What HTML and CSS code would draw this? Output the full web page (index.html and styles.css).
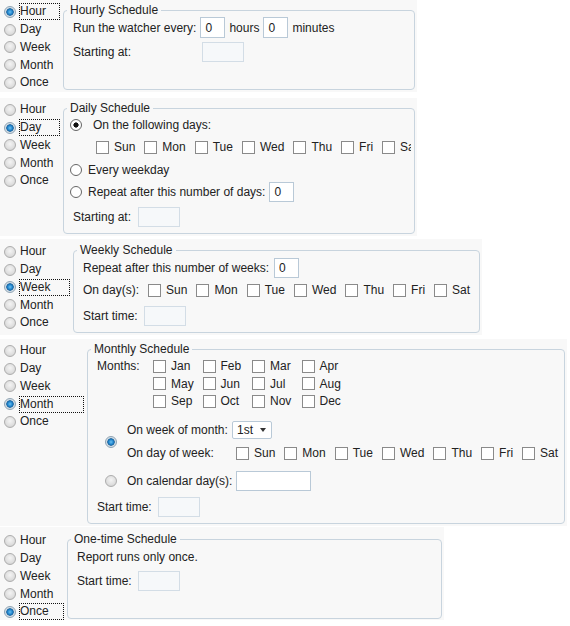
FILE: index.html
```html
<!DOCTYPE html>
<html>
<head>
<meta charset="utf-8">
<link rel="stylesheet" href="styles.css">
</head>
<body>

<div class="panel p1">
  <div class="choices">
    <div class="opt"><span class="rb on"></span><span class="lbl focus fw-hour">Hour</span></div>
    <div class="opt"><span class="rb"></span><span class="lbl">Day</span></div>
    <div class="opt"><span class="rb"></span><span class="lbl">Week</span></div>
    <div class="opt"><span class="rb"></span><span class="lbl">Month</span></div>
    <div class="opt"><span class="rb"></span><span class="lbl">Once</span></div>
  </div>
  <fieldset class="fs fs-hourly">
    <legend>Hourly Schedule</legend>
    <div class="hourly">
      <span class="t">Run the watcher every:</span>
      <div class="ctl"><input class="inp num" value="0"><span class="t">hours</span><input class="inp num" value="0"><span class="t">minutes</span></div>
      <span class="t">Starting at:</span>
      <div class="ctl"><input class="inp dis dis-first" disabled></div>
    </div>
  </fieldset>
</div>

<div class="panel p2">
  <div class="choices">
    <div class="opt"><span class="rb"></span><span class="lbl">Hour</span></div>
    <div class="opt"><span class="rb on"></span><span class="lbl focus fw-day">Day</span></div>
    <div class="opt"><span class="rb"></span><span class="lbl">Week</span></div>
    <div class="opt"><span class="rb"></span><span class="lbl">Month</span></div>
    <div class="opt"><span class="rb"></span><span class="lbl">Once</span></div>
  </div>
  <fieldset class="fs fs-daily">
    <legend>Daily Schedule</legend>
    <div class="daily">
      <div class="drow d-first"><span class="rw on"></span><span class="t">On the following days:</span></div>
      <div class="days d-days">
        <span class="day"><span class="cb"></span>Sun</span>
        <span class="day"><span class="cb"></span>Mon</span>
        <span class="day"><span class="cb"></span>Tue</span>
        <span class="day"><span class="cb"></span>Wed</span>
        <span class="day"><span class="cb"></span>Thu</span>
        <span class="day"><span class="cb"></span>Fri</span>
        <span class="day"><span class="cb"></span>Sat</span>
      </div>
      <div class="drow d-weekday"><span class="rw"></span><span class="t">Every weekday</span></div>
      <div class="drow d-repeat"><span class="rw"></span><span class="t">Repeat after this number of days:</span><input class="inp num" value="0"></div>
      <div class="srow d-start"><span class="t">Starting at:</span><input class="inp dis" disabled></div>
    </div>
  </fieldset>
</div>

<div class="panel p3">
  <div class="choices">
    <div class="opt"><span class="rb"></span><span class="lbl">Hour</span></div>
    <div class="opt"><span class="rb"></span><span class="lbl">Day</span></div>
    <div class="opt"><span class="rb on"></span><span class="lbl focus fw-week">Week</span></div>
    <div class="opt"><span class="rb"></span><span class="lbl">Month</span></div>
    <div class="opt"><span class="rb"></span><span class="lbl">Once</span></div>
  </div>
  <fieldset class="fs fs-weekly">
    <legend>Weekly Schedule</legend>
    <div class="weekly">
      <div class="srow w-repeat"><span class="t">Repeat after this number of weeks:</span><input class="inp num" value="0"></div>
      <div class="w-days">
        <span class="t">On day(s):</span>
        <div class="days">
          <span class="day"><span class="cb"></span>Sun</span>
          <span class="day"><span class="cb"></span>Mon</span>
          <span class="day"><span class="cb"></span>Tue</span>
          <span class="day"><span class="cb"></span>Wed</span>
          <span class="day"><span class="cb"></span>Thu</span>
          <span class="day"><span class="cb"></span>Fri</span>
          <span class="day"><span class="cb"></span>Sat</span>
        </div>
      </div>
      <div class="srow w-start"><span class="t">Start time:</span><input class="inp dis" disabled></div>
    </div>
  </fieldset>
</div>

<div class="panel p4">
  <div class="choices">
    <div class="opt"><span class="rb"></span><span class="lbl">Hour</span></div>
    <div class="opt"><span class="rb"></span><span class="lbl">Day</span></div>
    <div class="opt"><span class="rb"></span><span class="lbl">Week</span></div>
    <div class="opt"><span class="rb on"></span><span class="lbl focus fw-month">Month</span></div>
    <div class="opt"><span class="rb"></span><span class="lbl">Once</span></div>
  </div>
  <fieldset class="fs fs-monthly">
    <legend>Monthly Schedule</legend>
    <div class="monthly">
      <div class="months">
        <span class="t mlabel">Months:</span>
        <div class="mgrid">
          <span class="day"><span class="cb"></span>Jan</span>
          <span class="day"><span class="cb"></span>Feb</span>
          <span class="day"><span class="cb"></span>Mar</span>
          <span class="day"><span class="cb"></span>Apr</span>
          <span class="day"><span class="cb"></span>May</span>
          <span class="day"><span class="cb"></span>Jun</span>
          <span class="day"><span class="cb"></span>Jul</span>
          <span class="day"><span class="cb"></span>Aug</span>
          <span class="day"><span class="cb"></span>Sep</span>
          <span class="day"><span class="cb"></span>Oct</span>
          <span class="day"><span class="cb"></span>Nov</span>
          <span class="day"><span class="cb"></span>Dec</span>
        </div>
      </div>
      <div class="wk">
        <span class="rb on wk-radio1"></span>
        <span class="t wk-lab wk-r1">On week of month:</span>
        <div class="ctl wk-r1"><span class="sel">1st<span class="caret"></span></span></div>
        <span class="t wk-lab wk-r2">On day of week:</span>
        <div class="days wk-r2 wk-days">
          <span class="day"><span class="cb"></span>Sun</span>
          <span class="day"><span class="cb"></span>Mon</span>
          <span class="day"><span class="cb"></span>Tue</span>
          <span class="day"><span class="cb"></span>Wed</span>
          <span class="day"><span class="cb"></span>Thu</span>
          <span class="day"><span class="cb"></span>Fri</span>
          <span class="day"><span class="cb"></span>Sat</span>
        </div>
        <span class="rb wk-radio2"></span>
        <span class="t wk-lab wk-r3">On calendar day(s):</span>
        <div class="ctl wk-r3"><input class="inp cal"></div>
      </div>
      <div class="srow m-start"><span class="t">Start time:</span><input class="inp dis" disabled></div>
    </div>
  </fieldset>
</div>

<div class="panel p5">
  <div class="choices">
    <div class="opt"><span class="rb"></span><span class="lbl">Hour</span></div>
    <div class="opt"><span class="rb"></span><span class="lbl">Day</span></div>
    <div class="opt"><span class="rb"></span><span class="lbl">Week</span></div>
    <div class="opt"><span class="rb"></span><span class="lbl">Month</span></div>
    <div class="opt"><span class="rb on"></span><span class="lbl focus fw-once">Once</span></div>
  </div>
  <fieldset class="fs fs-once">
    <legend>One-time Schedule</legend>
    <div class="once">
      <div class="o-note"><span class="t">Report runs only once.</span></div>
      <div class="srow o-start"><span class="t">Start time:</span><input class="inp dis" disabled></div>
    </div>
  </fieldset>
</div>

</body>
</html>
```

FILE: styles.css
```css
* { box-sizing: border-box; }

html, body {
  margin: 0;
  padding: 0;
  background: #fff;
}

body {
  font-family: "Liberation Sans", Arial, sans-serif;
  font-size: 12px;
  line-height: 14px;
  color: #222;
}

/* ---------- panels ---------- */
.panel {
  display: flex;
  align-items: flex-start;
  width: fit-content;
  background: #f8f8f8;
  padding: 1px 2px 2px 0;
}
.p1 { margin-bottom: 6px; }
.p2 { margin-bottom: 3px; }
.p3 { padding-top: 2px; margin-bottom: 4px; }
.p4 { margin-bottom: 1px; }
.p5 { padding-top: 3px; padding-bottom: 1px; }

/* ---------- left radio list ---------- */
.choices {
  display: flex;
  flex-direction: column;
  margin: 2px 0 -2px;
}
.opt {
  display: flex;
  align-items: center;
  height: 17.75px;
  white-space: nowrap;
}
.rb {
  flex: none;
  display: inline-block;
  width: 12px;
  height: 12px;
  border-radius: 50%;
  border: 1px solid #adadad;
  background: radial-gradient(circle at 50% 40%, #f4f4f4 0, #dedede 60%, #c9c9c9 100%);
}
.choices .rb { margin-left: 4px; }
.rb.on {
  border-color: #8fa3b3;
  background: radial-gradient(circle at 50% 50%, #6cc0f0 0, #1f84cc 2.4px, #175f9a 3.4px, #cfdbe4 4px, #e9eff3 100%);
}
.lbl {
  margin-left: 4px;
  height: 15px;
  line-height: 15px;
}
.focus { outline: 1px dotted #111; }
.fw-hour { width: 39px; }
.fw-day { width: 39px; }
.fw-week { width: 49px; }
.fw-month { width: 63px; }
.fw-once { width: 43px; }

/* ---------- fieldsets ---------- */
.fs {
  margin: 2px 0 0 4px;
  padding: 0;
  border: 1px solid #c8d4de;
  border-radius: 4px;
  min-width: 0;
}
.fs legend {
  margin-left: 3px;
  padding: 0 3px;
  line-height: 14px;
}
.fs-hourly { width: 352px; }
.fs-daily { width: 352px; }
.fs-weekly { width: 407px; }
.fs-monthly { width: 478px; }
.fs-once { width: 375px; }

.t { white-space: nowrap; }

/* ---------- controls ---------- */
.inp {
  font-family: "Liberation Sans", Arial, sans-serif;
  font-size: 12px;
  color: #222;
  height: 20px;
  margin: 0;
  padding: 0 0 0 4px;
  border: 1px solid #b9c9d7;
  background: #fff;
  outline: none;
  flex: none;
}
.num { width: 25px; }
.dis {
  width: 42px;
  background: #f6f8fa;
  border-color: #d3dde6;
}
.cal { width: 75px; margin-left: 4px; }

.cb {
  flex: none;
  display: inline-block;
  width: 13px;
  height: 13px;
  border: 1px solid #8a8a8a;
  background: #fff;
  margin-right: 5px;
}
.rw {
  flex: none;
  display: inline-block;
  width: 12px;
  height: 12px;
  border-radius: 50%;
  border: 1px solid #666;
  background: #fff;
}
.rw.on {
  background: radial-gradient(circle, #111 0, #111 2.3px, #fff 2.9px);
}

.sel {
  display: flex;
  align-items: center;
  width: 40px;
  height: 18px;
  padding-left: 4px;
  border: 1px solid #b9c9d7;
  border-radius: 2px;
  background: #fff;
}
.caret {
  width: 0;
  height: 0;
  margin-left: 7px;
  border-left: 3.5px solid transparent;
  border-right: 3.5px solid transparent;
  border-top: 4px solid #333;
}

.ctl {
  display: flex;
  align-items: center;
  gap: 4px;
}
.days {
  display: flex;
  align-items: center;
  flex-wrap: nowrap;
}
.day {
  flex: none;
  display: flex;
  align-items: center;
  margin-right: 9px;
  white-space: nowrap;
}
.srow {
  display: flex;
  align-items: center;
  height: 20px;
}

/* ---------- hourly ---------- */
.hourly {
  display: grid;
  grid-template-columns: auto auto;
  grid-template-rows: 21px 20px;
  justify-content: start;
  align-items: center;
  column-gap: 4px;
  row-gap: 4px;
  padding: 0 0 27px 9px;
}
.hourly .num { height: 21px; }
.dis-first { margin-left: 2px; }

/* ---------- daily ---------- */
.daily {
  margin-right: 3px;
  padding-bottom: 6px;
  overflow: hidden;
}
.drow {
  display: flex;
  align-items: center;
  padding-left: 6px;
}
.drow .t { margin-left: 6px; }
.d-first { height: 20px; }
.d-first .t { margin-left: 11px; }
.d-days { height: 16px; margin-top: 4px; padding-left: 32px; }
.d-weekday { height: 16px; margin-top: 7px; }
.d-repeat { height: 20px; margin-top: 4px; }
.d-repeat .inp { margin-left: 4px; }
.d-start { margin-top: 5px; padding-left: 9px; }
.d-start .inp { margin-left: 7px; }

/* ---------- weekly ---------- */
.weekly {
  padding: 0 0 6px 9px;
}
.w-repeat { margin-top: 1px; }
.w-repeat .inp { margin-left: 5px; }
.w-days {
  display: flex;
  align-items: center;
  height: 16px;
  margin-top: 4px;
}
.w-days .days { margin-left: 9px; }
.w-start { margin-top: 8px; }
.w-start .inp { margin-left: 6px; }

/* ---------- monthly ---------- */
.monthly {
  padding: 0 0 6px 9px;
}
.months {
  display: flex;
  margin-top: 1.5px;
}
.mlabel {
  width: 56px;
  height: 17.5px;
  line-height: 17.5px;
}
.mgrid {
  display: grid;
  grid-template-columns: repeat(4, 49.5px);
  grid-auto-rows: 17.5px;
  align-items: center;
}
.wk {
  display: grid;
  grid-template-columns: 12px 115px auto;
  grid-template-rows: 20px 23px 28px;
  align-items: end;
  margin-top: 10px;
  padding-left: 8px;
}
.wk-lab {
  grid-column: 2;
  padding-left: 10px;
  height: 20px;
  line-height: 20px;
}
.wk-r1 { grid-row: 1; }
.wk-r2 { grid-row: 2; }
.wk-r3 { grid-row: 3; }
.ctl.wk-r1, .ctl.wk-r3, .wk-days { grid-column: 3; height: 20px; }
.wk-days { padding-left: 4px; }
.wk-radio1 { grid-column: 1; grid-row: 1 / span 2; align-self: center; }
.wk-radio2 { grid-column: 1; grid-row: 3; align-self: end; margin-bottom: 4px; }
.m-start { margin-top: 6px; }
.m-start .inp { margin-left: 6px; }

/* ---------- once ---------- */
.once {
  padding: 0 0 27px 9px;
}
.o-note {
  height: 16px;
  line-height: 16px;
  margin-top: 3px;
}
.o-start { margin-top: 6px; }
.o-start .inp { margin-left: 6px; }
```
